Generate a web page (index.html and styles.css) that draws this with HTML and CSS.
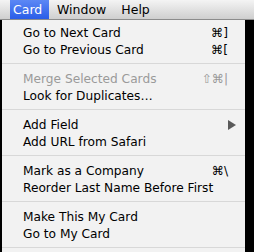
FILE: index.html
```html
<!DOCTYPE html>
<html lang="en">
<head>
  <meta charset="UTF-8" />
  <title>Card Menu</title>
  <link rel="stylesheet" href="styles.css">
</head>
<body>
  <header class="menubar">
    <span class="menubar-item active">Card</span>
    <span class="menubar-item">Window</span>
    <span class="menubar-item">Help</span>
  </header>

  <main class="stage">
    <ul class="menu">
      <li class="menu-item">
        <span>Go to Next Card</span>
        <span class="shortcut">⌘]</span>
      </li>
      <li class="menu-item">
        <span>Go to Previous Card</span>
        <span class="shortcut">⌘[</span>
      </li>
      <li class="separator"></li>
      <li class="menu-item disabled">
        <span>Merge Selected Cards</span>
        <span class="shortcut">⇧⌘|</span>
      </li>
      <li class="menu-item">
        <span>Look for Duplicates…</span>
      </li>
      <li class="separator"></li>
      <li class="menu-item">
        <span>Add Field</span>
        <span class="submenu-arrow"></span>
      </li>
      <li class="menu-item">
        <span>Add URL from Safari</span>
      </li>
      <li class="separator"></li>
      <li class="menu-item">
        <span>Mark as a Company</span>
        <span class="shortcut">⌘\</span>
      </li>
      <li class="menu-item">
        <span>Reorder Last Name Before First</span>
      </li>
      <li class="separator"></li>
      <li class="menu-item">
        <span>Make This My Card</span>
      </li>
      <li class="menu-item">
        <span>Go to My Card</span>
      </li>
      <li class="separator"></li>
    </ul>
  </main>
</body>
</html>
```

FILE: styles.css
```css
* {
  box-sizing: border-box;
}

body {
  margin: 0;
  width: 254px;
  height: 252px;
  overflow: hidden;
  font-family: "DejaVu Sans", sans-serif;
  font-size: 12.2px;
  background: #000;
  color: #000;
}

.menubar {
  display: flex;
  height: 20px;
  padding-left: 10px;
  background: linear-gradient(#f4f4f4, #cfcfcf);
  border-bottom: 1px solid #8c8c8c;
}

.menubar-item {
  display: flex;
  align-items: center;
  height: 19px;
  padding: 0 7px 0 8px;
  font-size: 12.5px;
}

.menubar-item.active {
  width: 39px;
  padding-left: 3px;
  background: linear-gradient(#5c88f5, #2a5de8);
  color: #fff;
}

.stage {
  padding: 0 9px 0 2px;
}

.menu {
  margin: 0;
  padding: 4px 0 0;
  list-style: none;
  background: #f2f2f2;
  height: 232px;
}

.menu-item {
  display: flex;
  align-items: center;
  justify-content: space-between;
  height: 17px;
  padding: 0 9px 0 21px;
}

.menu-item.disabled {
  color: #9a9a9a;
}

.shortcut {
  margin-right: 8px;
  text-align: right;
}

.separator {
  height: 1px;
  margin: 5px 0 6px;
  background: #d8d8d8;
}

.submenu-arrow {
  width: 0;
  height: 0;
  border-top: 5px solid transparent;
  border-bottom: 5px solid transparent;
  border-left: 8px solid #5a5a5a;
}
```
